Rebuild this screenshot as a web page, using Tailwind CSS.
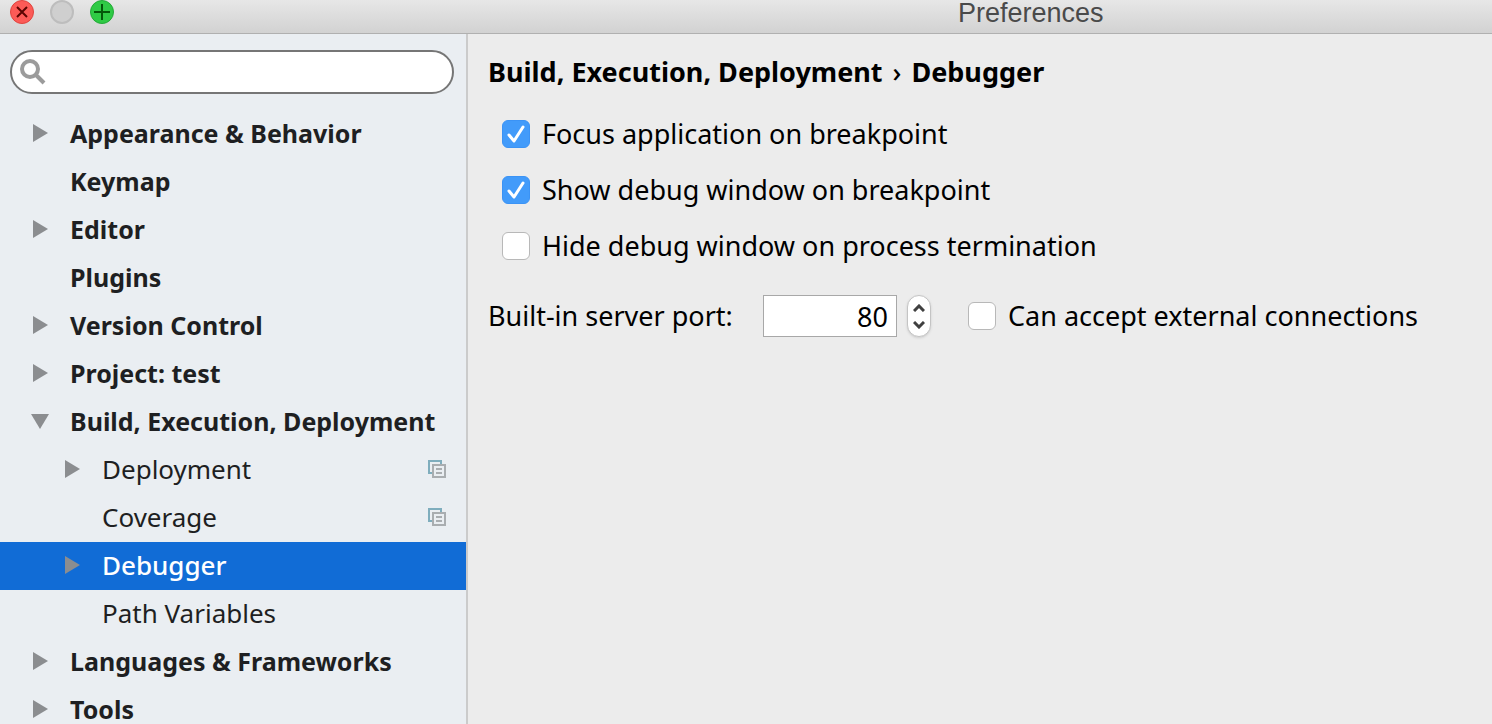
<!DOCTYPE html>
<html lang="en">
<head>
  <meta charset="UTF-8">
  <meta name="viewport" content="width=device-width, initial-scale=1.0">
  <title>Preferences</title>
  <script src="https://cdn.jsdelivr.net/npm/@tailwindcss/browser@4"></script>
</head>
<body class="flex h-screen flex-col overflow-hidden bg-[#ececec] font-['Lucida_Grande','Noto_Sans',sans-serif] text-[27px] leading-8 text-black">

  <!-- Shared icons -->
  <svg class="hidden">
    <symbol id="arrow-right" viewBox="0 0 16 18"><path d="M1 0v18l15-9z" fill="currentColor"/></symbol>
    <symbol id="arrow-down" viewBox="0 0 18 16"><path d="M0 1h18L9 16z" fill="currentColor"/></symbol>
    <symbol id="copy" viewBox="0 0 18 18">
      <path d="M4 13H1V1h12v3" fill="none" stroke="#7fadbd" stroke-width="2"/>
      <path d="M5 5h12v12H5z" fill="none" stroke="#a9adb0" stroke-width="2"/>
      <path d="M8 9h6M8 13h6" stroke="#a9adb0" stroke-width="2"/>
    </symbol>
  </svg>

  <!-- Title bar -->
  <header class="flex h-[34px] shrink-0 items-start border-b border-[#b0b0b0] bg-linear-to-b from-[#e7e7e7] to-[#d2d2d2] pl-[10px]">
    <div class="flex gap-4">
      <button aria-label="Close" class="size-6 rounded-full border border-[#e0443e] bg-[#fc5b57]">
        <svg class="size-full" viewBox="0 0 22 22"><path d="M6 6l10 10M16 6L6 16" stroke="#5c0502" stroke-width="2" fill="none"/></svg>
      </button>
      <button aria-label="Minimize" disabled class="size-6 rounded-full border-2 border-[#bdbdbd] bg-[#cfcfcf]"></button>
      <button aria-label="Zoom" class="size-6 rounded-full border border-[#24a938] bg-[#2fca45]">
        <svg class="size-full" viewBox="0 0 22 22"><path d="M11 3v16M3 11h16" stroke="#04570a" stroke-width="2" fill="none"/></svg>
      </button>
    </div>
    <h1 class="ml-[844px] font-['Liberation_Sans',sans-serif] text-[27px] leading-[26px] text-[#4a4a4a]">Preferences</h1>
  </header>

  <div class="flex min-h-0 flex-1">

    <!-- Sidebar -->
    <aside class="w-[468px] shrink-0 overflow-hidden border-r-2 border-[#cbcbcb] bg-[#eaeef2] pt-4 text-[#1e1f22]">
      <label class="mr-3 ml-[10px] flex h-11 items-center rounded-full border-2 border-[#767676] bg-white pl-2">
        <svg class="size-[26px] shrink-0" viewBox="0 0 26 26" fill="none" stroke="#9b9b9b">
          <circle cx="10" cy="10" r="8" stroke-width="4"/>
          <path d="M15 15l9 9" stroke-width="4"/>
        </svg>
        <input type="search" aria-label="Search preferences" class="ml-2 min-w-0 flex-1 bg-transparent outline-none">
      </label>

      <!-- Settings tree -->
      <nav class="mt-4 text-[26px] [&_a]:flex [&_a]:h-12 [&_a]:items-center [&_a]:pr-5 [&_a]:pb-[3px]">
        <a href="#appearance" class="gap-[22px] pl-8 text-[25px] font-bold"><svg class="h-[18px] w-4 shrink-0 text-[#8b8d90]"><use href="#arrow-right"/></svg>Appearance &amp; Behavior</a>
        <a href="#keymap" class="pl-[70px] text-[25px] font-bold">Keymap</a>
        <a href="#editor" class="gap-[22px] pl-8 text-[25px] font-bold"><svg class="h-[18px] w-4 shrink-0 text-[#8b8d90]"><use href="#arrow-right"/></svg>Editor</a>
        <a href="#plugins" class="pl-[70px] text-[25px] font-bold">Plugins</a>
        <a href="#vcs" class="gap-[22px] pl-8 text-[25px] font-bold"><svg class="h-[18px] w-4 shrink-0 text-[#8b8d90]"><use href="#arrow-right"/></svg>Version Control</a>
        <a href="#project" class="gap-[22px] pl-8 text-[25px] font-bold"><svg class="h-[18px] w-4 shrink-0 text-[#8b8d90]"><use href="#arrow-right"/></svg>Project: test</a>
        <a href="#build" class="gap-[21px] pl-[31px] text-[25px] font-bold whitespace-nowrap"><svg class="h-4 w-[18px] shrink-0 text-[#8b8d90]"><use href="#arrow-down"/></svg>Build, Execution, Deployment</a>
        <a href="#deployment" class="gap-[22px] pl-16"><svg class="h-[18px] w-4 shrink-0 text-[#8b8d90]"><use href="#arrow-right"/></svg>Deployment<svg class="ml-auto size-[18px]"><use href="#copy"/></svg></a>
        <a href="#coverage" class="pl-[102px]">Coverage<svg class="ml-auto size-[18px]"><use href="#copy"/></svg></a>
        <a href="#debugger" aria-current="page" class="gap-[22px] bg-[#116cd6] pl-16 font-medium text-white"><svg class="h-[18px] w-4 shrink-0 text-[#8b8d90]"><use href="#arrow-right"/></svg>Debugger</a>
        <a href="#path-variables" class="pl-[102px]">Path Variables</a>
        <a href="#languages" class="gap-[22px] pl-8 text-[25px] font-bold"><svg class="h-[18px] w-4 shrink-0 text-[#8b8d90]"><use href="#arrow-right"/></svg>Languages &amp; Frameworks</a>
        <a href="#tools" class="gap-[22px] pl-8 text-[25px] font-bold"><svg class="h-[18px] w-4 shrink-0 text-[#8b8d90]"><use href="#arrow-right"/></svg>Tools</a>
      </nav>
    </aside>

    <!-- Debugger settings -->
    <main class="min-w-0 flex-1 pt-[22px] pl-5">
      <h2 class="flex gap-[10px] font-bold whitespace-nowrap">Build, Execution, Deployment <span class="font-medium">›</span> <span>Debugger</span></h2>

      <div class="mt-[30px] ml-[14px] flex flex-col gap-6">
        <label class="flex items-center gap-3">
          <span class="grid size-7 shrink-0">
            <input type="checkbox" checked class="peer col-start-1 row-start-1 size-7 appearance-none rounded-md border border-[#b8b8b8] bg-white checked:border-[#3b93f5] checked:bg-[#429bfa]">
            <svg class="pointer-events-none col-start-1 row-start-1 hidden size-7 peer-checked:block" viewBox="0 0 28 28"><path d="M7 15l5 6 9-14" fill="none" stroke="#fff" stroke-width="3" stroke-linecap="round" stroke-linejoin="round"/></svg>
          </span>
          Focus application on breakpoint
        </label>
        <label class="flex items-center gap-3">
          <span class="grid size-7 shrink-0">
            <input type="checkbox" checked class="peer col-start-1 row-start-1 size-7 appearance-none rounded-md border border-[#b8b8b8] bg-white checked:border-[#3b93f5] checked:bg-[#429bfa]">
            <svg class="pointer-events-none col-start-1 row-start-1 hidden size-7 peer-checked:block" viewBox="0 0 28 28"><path d="M7 15l5 6 9-14" fill="none" stroke="#fff" stroke-width="3" stroke-linecap="round" stroke-linejoin="round"/></svg>
          </span>
          Show debug window on breakpoint
        </label>
        <label class="flex items-center gap-3">
          <input type="checkbox" class="size-7 shrink-0 appearance-none rounded-md border border-[#b8b8b8] bg-white checked:bg-[#429bfa]">
          Hide debug window on process termination
        </label>
      </div>

      <div class="mt-[33px] flex items-center">
        <label for="port" class="w-[275px] shrink-0">Built-in server port:</label>
        <input id="port" type="text" inputmode="numeric" value="80" class="h-[42px] w-[134px] border border-[#a8a8a8] bg-white pr-2 text-right outline-none">
        <div class="ml-[10px] flex h-[42px] w-6 flex-col overflow-hidden rounded-full border border-[#c4c4c4] bg-white shadow-sm">
          <button id="port-up" aria-label="Increase port" class="flex flex-1 items-end justify-center pb-1">
            <svg class="h-2 w-3" viewBox="0 0 12 8"><path d="M1 7l5-5 5 5" fill="none" stroke="#404040" stroke-width="3"/></svg>
          </button>
          <button id="port-down" aria-label="Decrease port" class="flex flex-1 items-start justify-center pt-[5px]">
            <svg class="h-2 w-3" viewBox="0 0 12 8"><path d="M1 1l5 5 5-5" fill="none" stroke="#404040" stroke-width="3"/></svg>
          </button>
        </div>
        <label class="ml-[37px] flex items-center gap-3 whitespace-nowrap">
          <input type="checkbox" class="size-7 shrink-0 appearance-none rounded-md border border-[#b8b8b8] bg-white checked:bg-[#429bfa]">
          Can accept external connections
        </label>
      </div>
    </main>
  </div>

  <script>
    const port = document.getElementById('port');

    // Stepper buttons change the port by one
    function stepPort(delta) {
      port.value = Math.max(0, (parseInt(port.value, 10) || 0) + delta);
    }
    document.getElementById('port-up').addEventListener('click', () => stepPort(1));
    document.getElementById('port-down').addEventListener('click', () => stepPort(-1));
  </script>
</body>
</html>
